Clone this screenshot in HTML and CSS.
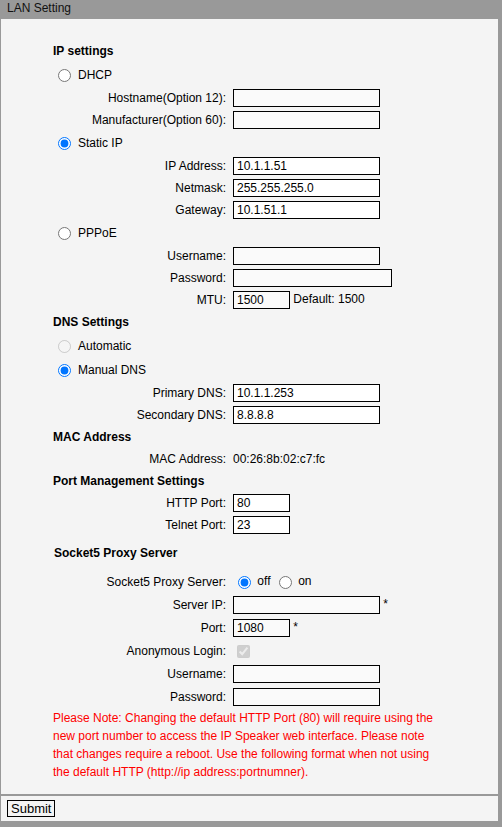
FILE: index.html
```html
<!DOCTYPE html>
<html lang="en">
<head>
    <meta charset="UTF-8">
    <meta name="viewport" content="width=device-width, initial-scale=1.0">
    <title>LAN Setting</title>
    <link rel="stylesheet" href="styles.css">
</head>
<body>
    <div class="header">LAN Setting</div>

    <form class="panel" id="lan-form">
        <div class="form">
            <div class="sec-title">IP settings</div>
            <label class="opt"><input type="radio" name="ipmode" value="dhcp">DHCP</label>
            <div class="row">
                <span class="lbl">Hostname(Option 12):</span>
                <span><input type="text" class="txt" name="hostname"></span>
            </div>
            <div class="row">
                <span class="lbl">Manufacturer(Option 60):</span>
                <span><input type="text" class="txt" name="vendor"></span>
            </div>
            <label class="opt"><input type="radio" name="ipmode" value="static" checked>Static IP</label>
            <div class="row">
                <span class="lbl">IP Address:</span>
                <span><input type="text" class="txt filled" name="ip" value="10.1.1.51"></span>
            </div>
            <div class="row">
                <span class="lbl">Netmask:</span>
                <span><input type="text" class="txt filled" name="netmask" value="255.255.255.0"></span>
            </div>
            <div class="row">
                <span class="lbl">Gateway:</span>
                <span><input type="text" class="txt filled" name="gateway" value="10.1.51.1"></span>
            </div>
            <label class="opt"><input type="radio" name="ipmode" value="pppoe">PPPoE</label>
            <div class="row">
                <span class="lbl">Username:</span>
                <span><input type="text" class="txt" name="ppp_user"></span>
            </div>
            <div class="row">
                <span class="lbl">Password:</span>
                <span><input type="password" class="txt wide" name="ppp_pass"></span>
            </div>
            <div class="row">
                <span class="lbl">MTU:</span>
                <span><input type="text" class="txt short" name="mtu" value="1500"> Default: 1500</span>
            </div>

            <div class="sec-title">DNS Settings</div>
            <label class="opt"><input type="radio" name="dnsmode" value="auto" disabled>Automatic</label>
            <label class="opt"><input type="radio" name="dnsmode" value="manual" checked>Manual DNS</label>
            <div class="row">
                <span class="lbl">Primary DNS:</span>
                <span><input type="text" class="txt filled" name="dns1" value="10.1.1.253"></span>
            </div>
            <div class="row">
                <span class="lbl">Secondary DNS:</span>
                <span><input type="text" class="txt filled" name="dns2" value="8.8.8.8"></span>
            </div>

            <div class="sec-title">MAC Address</div>
            <div class="row">
                <span class="lbl">MAC Address:</span>
                <span>00:26:8b:02:c7:fc</span>
            </div>

            <div class="sec-title">Port Management Settings</div>
            <div class="row">
                <span class="lbl">HTTP Port:</span>
                <span><input type="text" class="txt short filled" name="http_port" value="80"></span>
            </div>
            <div class="row">
                <span class="lbl">Telnet Port:</span>
                <span><input type="text" class="txt short filled" name="telnet_port" value="23"></span>
            </div>

            <div class="proxy">
                <div class="sec-title">Socket5 Proxy Server</div>
                <div class="row radio-row">
                    <span class="lbl">Socket5 Proxy Server:</span>
                    <span>
                        <input type="radio" name="socks" value="0" checked> off
                        <input type="radio" name="socks" value="1"> on
                    </span>
                </div>
                <div class="row">
                    <span class="lbl">Server IP:</span>
                    <span><input type="text" class="txt" name="socks_ip"> *</span>
                </div>
                <div class="row">
                    <span class="lbl">Port:</span>
                    <span><input type="text" class="txt short" name="socks_port" value="1080"> *</span>
                </div>
                <div class="row">
                    <span class="lbl">Anonymous Login:</span>
                    <span><input type="checkbox" name="socks_anon" checked disabled></span>
                </div>
                <div class="row">
                    <span class="lbl">Username:</span>
                    <span><input type="text" class="txt" name="socks_user"></span>
                </div>
                <div class="row">
                    <span class="lbl">Password:</span>
                    <span><input type="password" class="txt" name="socks_pass"></span>
                </div>
            </div>

            <p class="note">Please Note: Changing the default HTTP Port (80) will require using the new port number to access the IP Speaker web interface. Please note that changes require a reboot. Use the following format when not using the default HTTP (http://ip address:portnumner).</p>
        </div>
    </form>

    <div class="footer">
        <button type="submit" form="lan-form">Submit</button>
    </div>
</body>
</html>
```

FILE: styles.css
```css
body {
    margin: 0;
    padding: 0;
    background-color: #999;
    font-family: "Liberation Sans", Arial, sans-serif;
    font-size: 12px;
    color: #000;
}

.header {
    height: 19px;
    line-height: 16px;
    padding-left: 7px;
    color: #111;
}

.panel {
    display: block;
    width: 497px;
    margin: 0 0 0 1px;
    padding: 21px 0 13px;
    background-color: #f4f4f4;
}

.form {
    width: 393px;
    margin: 0 auto;
}

.sec-title {
    height: 22px;
    line-height: 22px;
    font-weight: bold;
}

.sec-title + .opt {
    margin-top: 1px;
}

.opt {
    display: flex;
    align-items: center;
    height: 24px;
}

.opt input {
    margin: 0 7px 0 5px;
}

.row {
    display: grid;
    grid-template-columns: 173px 1fr;
    column-gap: 7px;
    align-items: center;
    height: 22px;
}

.lbl {
    text-align: right;
}

.txt {
    box-sizing: border-box;
    width: 147px;
    height: 18px;
    margin: 0;
    padding: 0 3px;
    border: 1px solid #000;
    background-color: #fafafa;
    font-family: "Liberation Sans", Arial, sans-serif;
    font-size: 12px;
    color: #000;
    vertical-align: middle;
}

.txt.filled {
    background-color: #fff;
}

.txt.wide {
    width: 159px;
}

.txt.short {
    width: 57px;
}

.row input[type="radio"],
.row input[type="checkbox"] {
    vertical-align: middle;
}

.row input[type="radio"] {
    margin: 0 3px 0 5px;
}

.row input[type="checkbox"] {
    margin: 0 3px 0 4px;
}

.proxy {
    margin-top: 6px;
}

.proxy .sec-title {
    padding-left: 1px;
}

.proxy .radio-row {
    height: 24px;
    margin-top: 6px;
}

.proxy .row {
    height: 23px;
}

.note {
    margin: 1px 0 0;
    line-height: 18px;
    color: #f00;
}

.footer {
    width: 491px;
    margin: 2px 0 0 1px;
    padding: 4px 0 4px 6px;
    background-color: #f4f4f4;
}

.footer button {
    height: 17px;
    margin: 0;
    padding: 0 3px;
    border: 1px solid #000;
    border-radius: 0;
    background-color: #f4f4f4;
    font-family: "Liberation Sans", Arial, sans-serif;
    font-size: 13px;
    line-height: 15px;
    color: #000;
    cursor: pointer;
}
```
